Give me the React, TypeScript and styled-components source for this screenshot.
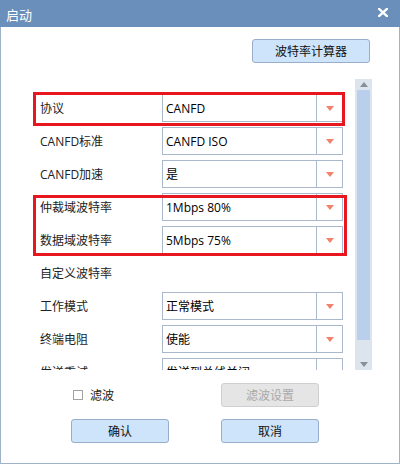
import React from "react";
import styled, { createGlobalStyle, css } from "styled-components";

const Global = createGlobalStyle`
  html, body { margin: 0; padding: 0; background: #ffffff; }
  body { font-family: "Open Sans", "Noto Sans CJK SC", sans-serif; font-size: 12px; color: #1a1a1a; }
  * { box-sizing: border-box; }
`;

const Window = styled.div`
  width: 400px;
  height: 464px;
  display: flex;
  flex-direction: column;
  background: #fff;
`;

const TitleBar = styled.div`
  height: 27px;
  flex: none;
  background: #6a8fba;
  display: flex;
  align-items: center;
  justify-content: space-between;
  padding: 2px 12px 0 6px;
  color: #fff;
  font-family: "Noto Sans CJK SC", sans-serif;
  font-size: 13px;
`;

const CloseBtn = styled.svg`
  width: 10px;
  height: 9px;
  margin-bottom: 4px;
`;

const Body = styled.div`
  flex: 1;
  display: flex;
  flex-direction: column;
  border: 1px solid #9fb2ca;
  border-top: none;
`;

const TopBar = styled.div`
  display: flex;
  justify-content: flex-end;
  padding: 12px 29px 0 0;
`;

const Button = styled.button<{ $w?: number; $disabled?: boolean }>`
  width: ${(p) => p.$w ?? 98}px;
  height: 24px;
  border: 1px solid #98aecb;
  border-radius: 3px;
  background: #cde4fb;
  color: #111;
  font-family: "Open Sans", "Noto Sans CJK SC", sans-serif;
  font-size: 12px;
  padding: 0;
  display: flex;
  align-items: center;
  justify-content: center;
  ${(p) =>
    p.$disabled &&
    css`
      background: #e5e5e5;
      border-color: #cfcfcf;
      color: #a9a9a9;
    `}
`;

const ContentRow = styled.div`
  display: flex;
  margin-top: 16px;
  height: 291px;
  padding-right: 27px;
`;

const Viewport = styled.div`
  flex: 1;
  position: relative;
  overflow: hidden;
  padding-top: 15px;
`;

const Row = styled.div`
  display: grid;
  grid-template-columns: 122px 181px;
  align-items: center;
  height: 28px;
  margin-bottom: 5px;
  padding-left: 39px;
`;

const Label = styled.div`
  color: #222;
  white-space: nowrap;
`;

const Select = styled.div`
  display: flex;
  height: 28px;
  border: 1px solid #a9b8cb;
  background: #fff;
`;

const SelectText = styled.div`
  flex: 1;
  display: flex;
  align-items: center;
  padding-left: 3px;
  color: #000;
  white-space: nowrap;
`;

const DropBtn = styled.div`
  width: 26px;
  border-left: 1px solid #a9b8cb;
  display: flex;
  align-items: center;
  justify-content: center;
`;

const DownTri = styled.span<{ $color?: string; $w?: number; $h?: number }>`
  width: 0;
  height: 0;
  border-left: ${(p) => (p.$w ?? 8) / 2}px solid transparent;
  border-right: ${(p) => (p.$w ?? 8) / 2}px solid transparent;
  border-top: ${(p) => p.$h ?? 5}px solid ${(p) => p.$color ?? "#f2826a"};
`;

const UpTri = styled.span`
  width: 0;
  height: 0;
  border-left: 4px solid transparent;
  border-right: 4px solid transparent;
  border-bottom: 5px solid #8a8f96;
`;

const Highlight = styled.div`
  position: absolute;
  border: 3px solid #e8161f;
  pointer-events: none;
`;

const Scrollbar = styled.div`
  width: 17px;
  background: #dce4ee;
  display: flex;
  flex-direction: column;
`;

const ArrowCell = styled.div`
  height: 11px;
  display: flex;
  align-items: center;
  justify-content: center;
`;

const Thumb = styled.div`
  height: 250px;
  margin: 0 2px;
  background: #b9cfeb;
`;

const Spacer = styled.div`
  flex: 1;
`;

const Footer = styled.div`
  display: grid;
  grid-template-columns: 98px 98px;
  column-gap: 52px;
  row-gap: 12px;
  margin-top: 13px;
  padding-left: 70px;
`;

const CheckCell = styled.label`
  display: flex;
  align-items: center;
  gap: 7px;
  padding-left: 2px;
  color: #222;
`;

const CheckBox = styled.span`
  width: 10px;
  height: 10px;
  border: 1px solid #a3a3a3;
  background: #fff;
`;

type Item = { label: string; value?: string };

const items: Item[] = [
  { label: "协议", value: "CANFD" },
  { label: "CANFD标准", value: "CANFD ISO" },
  { label: "CANFD加速", value: "是" },
  { label: "仲裁域波特率", value: "1Mbps 80%" },
  { label: "数据域波特率", value: "5Mbps 75%" },
  { label: "自定义波特率" },
  { label: "工作模式", value: "正常模式" },
  { label: "终端电阻", value: "使能" },
  { label: "发送重试", value: "发送到总线关闭" },
];

export default function App() {
  return (
    <>
      <Global />
      <Window>
        <TitleBar>
          <span>启动</span>
          <CloseBtn viewBox="0 0 10 9">
            <path d="M1 0.8 L9 8.2 M9 0.8 L1 8.2" stroke="#fff" strokeWidth="2.3" strokeLinecap="square" />
          </CloseBtn>
        </TitleBar>
        <Body>
          <TopBar>
            <Button $w={118}>波特率计算器</Button>
          </TopBar>
          <ContentRow>
            <Viewport>
              {items.map((it) => (
                <Row key={it.label}>
                  <Label>{it.label}</Label>
                  {it.value !== undefined && (
                    <Select>
                      <SelectText>{it.value}</SelectText>
                      <DropBtn>
                        <DownTri />
                      </DropBtn>
                    </Select>
                  )}
                </Row>
              ))}
              <Highlight style={{ top: 13, left: 32, width: 312, height: 34 }} />
              <Highlight style={{ top: 116, left: 32, width: 314, height: 61 }} />
            </Viewport>
            <Scrollbar>
              <ArrowCell>
                <UpTri />
              </ArrowCell>
              <Thumb />
              <Spacer />
              <ArrowCell>
                <DownTri $color="#8a8f96" $w={8} $h={5} />
              </ArrowCell>
            </Scrollbar>
          </ContentRow>
          <Footer>
            <CheckCell>
              <CheckBox />
              滤波
            </CheckCell>
            <Button $disabled>滤波设置</Button>
            <Button>确认</Button>
            <Button>取消</Button>
          </Footer>
        </Body>
      </Window>
    </>
  );
}
